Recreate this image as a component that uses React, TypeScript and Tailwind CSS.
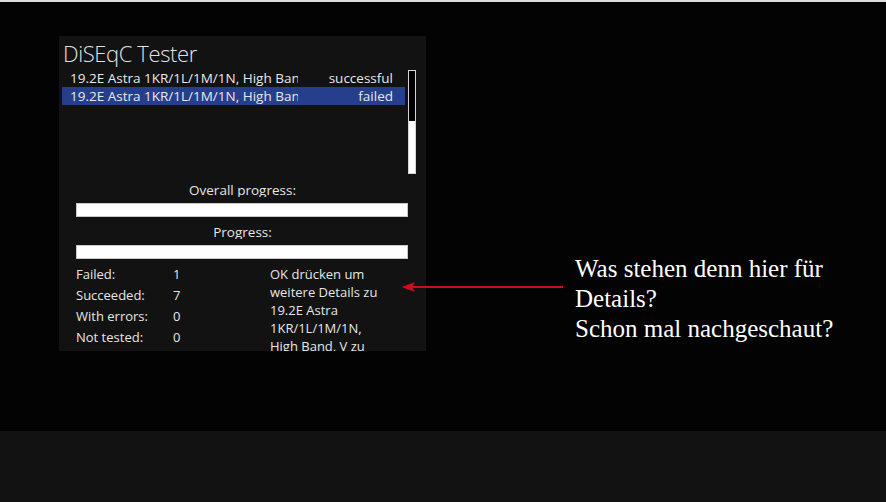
const rows = [
  { name: '19.2E Astra 1KR/1L/1M/1N, High Band, H', state: 'successful', selected: false },
  { name: '19.2E Astra 1KR/1L/1M/1N, High Band, V', state: 'failed', selected: true },
];

const stats = [
  ['Failed:', '1'],
  ['Succeeded:', '7'],
  ['With errors:', '0'],
  ['Not tested:', '0'],
];

function ProgressLabel({ text, box }: { text: string; box: string }) {
  return (
    <div className={`overflow-hidden text-center text-[13.5px] leading-[19px] text-[#e6e6e6] ${box}`}>{text}</div>
  );
}

function ProgressBar() {
  return <div className="ml-[17px] mt-[6px] h-[14px] w-[332px] border border-[#c8c8c8] bg-white" />;
}

export default function App() {
  return (
    <div className="flex h-[502px] w-[886px] flex-col bg-[#030303] font-['Open_Sans',sans-serif]">
      <div className="h-[2px] bg-[#dcdcdc]" />

      <div className="relative flex flex-1 items-start">
        {/* Tester window */}
        <div className="ml-[59px] mt-[34px] h-[315px] w-[367px] overflow-hidden bg-[#121212]">
          <div className="mt-[2px] pl-[4px] text-[22px] font-light leading-[30px] tracking-[-0.4px] text-[#e2e2e2]">
            DiSEqC Tester
          </div>

          <div className="mt-[1px] flex items-start">
            <div className="ml-[3px] w-[343px]">
              {rows.map((r) => (
                <div
                  key={r.name}
                  className={`flex h-[18px] items-center pl-[8px] pr-[12px] text-[13.5px] leading-[18px] text-[#e8e8e8] ${
                    r.selected ? 'bg-[#263f8c]' : ''
                  }`}
                >
                  <span className="w-[228px] overflow-hidden whitespace-nowrap">{r.name}</span>
                  <span className="ml-auto">{r.state}</span>
                </div>
              ))}
            </div>
            <div className="ml-[3px] mt-[1px] flex h-[104px] w-[8px] flex-col justify-end border border-[#d4d4d4] bg-black">
              <div className="h-[52px] bg-white" />
            </div>
          </div>

          <ProgressLabel text="Overall progress:" box="h-[23px] pt-[7px]" />
          <ProgressBar />
          <ProgressLabel text="Progress:" box="h-[22px] pt-[6px]" />
          <ProgressBar />

          <div className="flex items-start text-[13px] text-[#e6e6e6]">
            <div className="ml-[17px] mt-[5px] leading-[21px]">
              {stats.map(([k, v]) => (
                <div key={k} className="flex">
                  <span className="w-[97px]">{k}</span>
                  <span>{v}</span>
                </div>
              ))}
            </div>
            <div className="ml-auto mr-[41px] mt-[6px] w-[115px] leading-[18px]">
              OK drücken um weitere Details zu 19.2E Astra 1KR/1L/1M/1N, High Band, V zu sehen
            </div>
          </div>
        </div>

        {/* Annotation */}
        <div className="ml-[149px] mt-[252px] font-['Liberation_Serif',serif] text-[25px] leading-[30px] text-white">
          <div>Was stehen denn hier für</div>
          <div>Details?</div>
          <div>Schon mal nachgeschaut?</div>
        </div>

        <svg className="absolute left-[400px] top-[279px]" width="166" height="12" viewBox="0 0 166 12">
          <line x1="10" y1="6" x2="163" y2="6" stroke="#c8101c" strokeWidth="2" />
          <path d="M1.5 6 L15 1 L12 6 L15 11 Z" fill="#c8101c" />
        </svg>
      </div>

      <div className="h-[71px] bg-[#121212]" />
    </div>
  );
}
